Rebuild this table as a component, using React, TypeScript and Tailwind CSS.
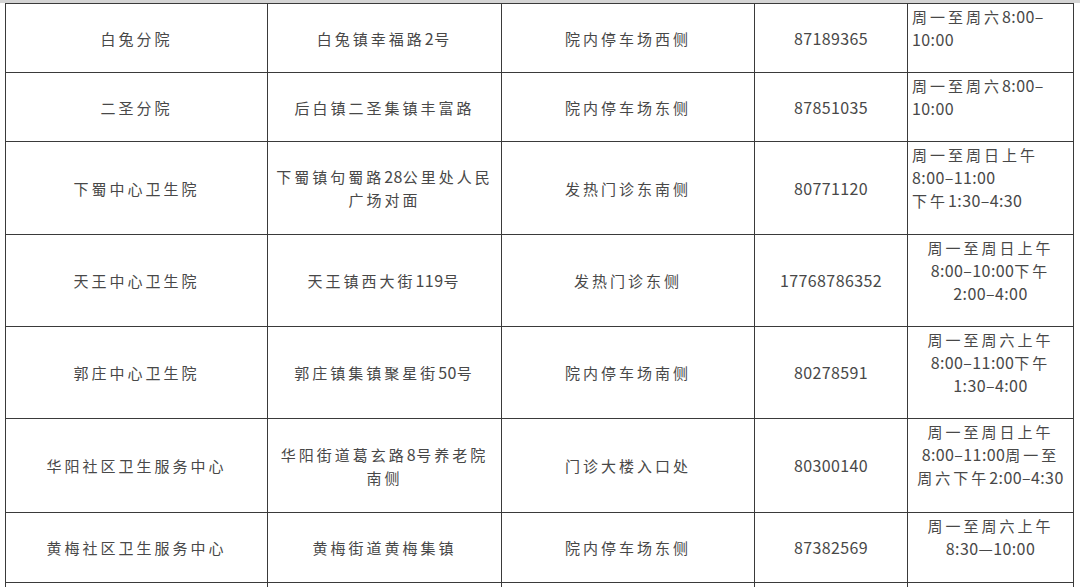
import React from "react";

type Row = {
  name: string;
  addr: string[];
  spot: string;
  phone: string;
  hours: string[];
  hoursCenter?: boolean;
  h: string;
};

const rows: Row[] = [
  { name: "白兔分院", addr: ["白兔镇幸福路2号"], spot: "院内停车场西侧", phone: "87189365", hours: ["周一至周六8:00–", "10:00"], h: "h-[69px]" },
  { name: "二圣分院", addr: ["后白镇二圣集镇丰富路"], spot: "院内停车场东侧", phone: "87851035", hours: ["周一至周六8:00–", "10:00"], h: "h-[69px]" },
  { name: "下蜀中心卫生院", addr: ["下蜀镇句蜀路28公里处人民", "广场对面"], spot: "发热门诊东南侧", phone: "80771120", hours: ["周一至周日上午", "8:00–11:00", "下午1:30–4:30"], h: "h-[93px]" },
  { name: "天王中心卫生院", addr: ["天王镇西大街119号"], spot: "发热门诊东侧", phone: "17768786352", hours: ["周一至周日上午", "8:00–10:00下午", "2:00–4:00"], hoursCenter: true, h: "h-[92px]" },
  { name: "郭庄中心卫生院", addr: ["郭庄镇集镇聚星街50号"], spot: "院内停车场南侧", phone: "80278591", hours: ["周一至周六上午", "8:00–11:00下午", "1:30–4:00"], hoursCenter: true, h: "h-[92px]" },
  { name: "华阳社区卫生服务中心", addr: ["华阳街道葛玄路8号养老院", "南侧"], spot: "门诊大楼入口处", phone: "80300140", hours: ["周一至周日上午", "8:00–11:00周一至", "周六下午2:00–4:30"], hoursCenter: true, h: "h-[94px]" },
  { name: "黄梅社区卫生服务中心", addr: ["黄梅街道黄梅集镇"], spot: "院内停车场东侧", phone: "87382569", hours: ["周一至周六上午", "8:30—10:00"], hoursCenter: true, h: "h-[70px]" },
];

// CJK runs get wide tracking, digits and punctuation a bit larger and tighter
const Txt = ({ s }: { s: string }) => (
  <>
    {s.split(/([\u4e00-\u9fff]+)/).filter(Boolean).map((part, i) =>
      /[\u4e00-\u9fff]/.test(part) ? (
        <span key={i} className="text-[15px] tracking-[3px]">{part}</span>
      ) : (
        <span key={i} className="text-[16px] tracking-[0.4px]">{part}</span>
      )
    )}
  </>
);

const cell = "border border-[#3a3a3a] p-0";

const App = () => {
  return (
    <div className="h-[587px] w-[1080px] overflow-hidden bg-white" style={{ fontFamily: '"Noto Sans CJK SC", "Noto Sans", sans-serif' }}>
      <div className="h-[3px] bg-[#d4d4d4]" />
      <table className="ml-[5px] table-fixed border-collapse text-[#484848] leading-[23px]">
        <colgroup>
          <col className="w-[262px]" />
          <col className="w-[234px]" />
          <col className="w-[253px]" />
          <col className="w-[153px]" />
          <col className="w-[166px]" />
        </colgroup>
        <tbody>
          {rows.map((r) => (
            <tr key={r.name} className={r.h}>
              <td className={`${cell} text-center align-middle`}>
                <Txt s={r.name} />
              </td>
              <td className={`${cell} text-center align-middle`}>
                {r.addr.map((l) => (
                  <div key={l}><Txt s={l} /></div>
                ))}
              </td>
              <td className={`${cell} text-center align-middle`}>
                <Txt s={r.spot} />
              </td>
              <td className={`${cell} text-center align-middle`}>
                <Txt s={r.phone} />
              </td>
              <td className={`${cell} align-top pt-[1px] ${r.hoursCenter ? "text-center" : "pl-[4px] text-left"}`}>
                {r.hours.map((l) => (
                  <div key={l} className="whitespace-nowrap"><Txt s={l} /></div>
                ))}
              </td>
            </tr>
          ))}
          <tr className="h-[20px]">
            <td className={cell} />
            <td className={cell} />
            <td className={cell} />
            <td className={cell} />
            <td className={cell} />
          </tr>
        </tbody>
      </table>
    </div>
  );
};

export default App;
